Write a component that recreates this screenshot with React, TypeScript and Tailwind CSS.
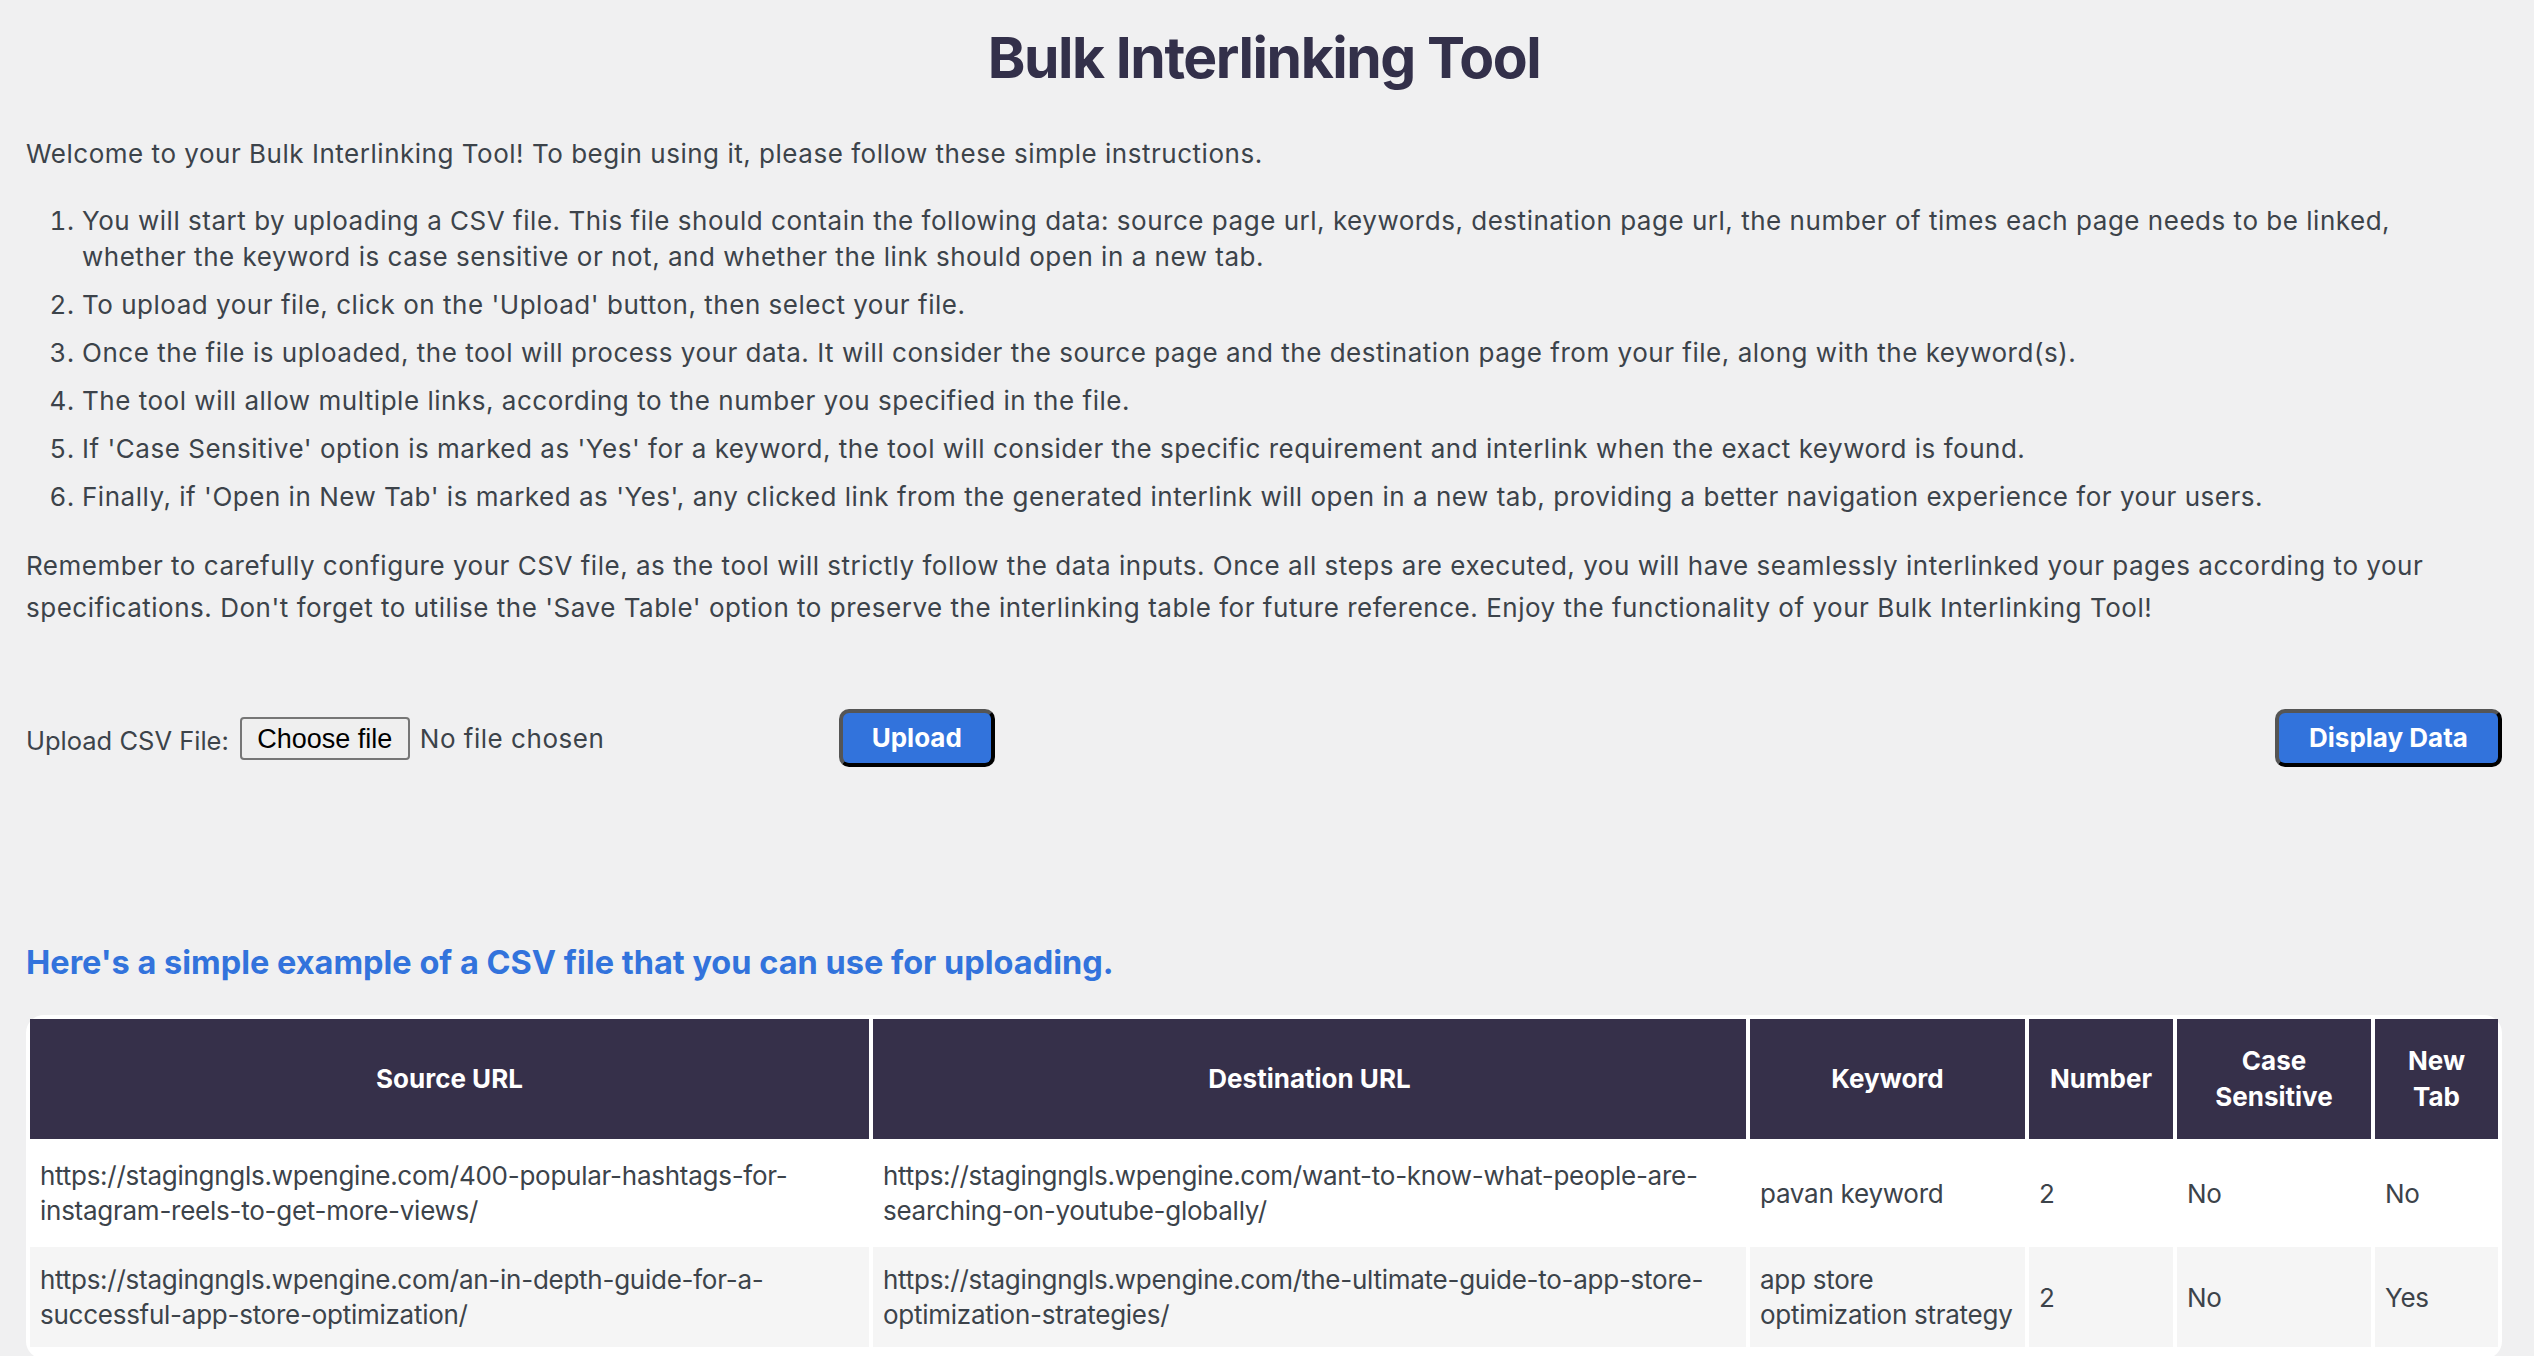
import React from "react";

interface LinkRow {
  source: string;
  destination: string;
  keyword: string;
  number: number;
  caseSensitive: string;
  newTab: string;
}

const SAMPLE_ROWS: LinkRow[] = [
  {
    source:
      "https://stagingngls.wpengine.com/400-popular-hashtags-for-instagram-reels-to-get-more-views/",
    destination:
      "https://stagingngls.wpengine.com/want-to-know-what-people-are-searching-on-youtube-globally/",
    keyword: "pavan keyword",
    number: 2,
    caseSensitive: "No",
    newTab: "No",
  },
  {
    source:
      "https://stagingngls.wpengine.com/an-in-depth-guide-for-a-successful-app-store-optimization/",
    destination:
      "https://stagingngls.wpengine.com/the-ultimate-guide-to-app-store-optimization-strategies/",
    keyword: "app store optimization strategy",
    number: 2,
    caseSensitive: "No",
    newTab: "Yes",
  },
];

const STEPS = [
  "You will start by uploading a CSV file. This file should contain the following data: source page url, keywords, destination page url, the number of times each page needs to be linked, whether the keyword is case sensitive or not, and whether the link should open in a new tab.",
  "To upload your file, click on the 'Upload' button, then select your file.",
  "Once the file is uploaded, the tool will process your data. It will consider the source page and the destination page from your file, along with the keyword(s).",
  "The tool will allow multiple links, according to the number you specified in the file.",
  "If 'Case Sensitive' option is marked as 'Yes' for a keyword, the tool will consider the specific requirement and interlink when the exact keyword is found.",
  "Finally, if 'Open in New Tab' is marked as 'Yes', any clicked link from the generated interlink will open in a new tab, providing a better navigation experience for your users.",
];

const HEADERS = ["Source URL", "Destination URL", "Keyword", "Number", "Case Sensitive", "New Tab"];

const btnClass =
  "h-[58px] rounded-[10px] border-[4px] border-t-[#555] border-l-[#555] border-b-black border-r-black bg-[#3273dc] text-white font-bold text-[26px] leading-none";

const cellClass = "h-[100px] pl-[10px] pr-[4px] leading-[35px] align-middle";

export default function App() {
  const [fileName, setFileName] = React.useState<string | null>(null);
  const fileRef = React.useRef<HTMLInputElement>(null);

  return (
    <div className="min-h-screen bg-[#f0f0f1] text-[#3c434a] font-['Inter',sans-serif] pl-[26px] pr-[32px] pt-[22px] pb-[40px]">
      <h1 className="text-center text-[57px] leading-[72px] font-bold text-[#33304a] tracking-[-0.025em]">
        Bulk Interlinking Tool
      </h1>

      <p className="mt-[42px] text-[26px] leading-[36px] tracking-[0.02em]">
        Welcome to your Bulk Interlinking Tool! To begin using it, please follow these simple
        instructions.
      </p>

      <ol className="mt-[31px] pl-[56px] list-decimal flex flex-col gap-[12px] text-[26px] leading-[36px] tracking-[0.02em]">
        {STEPS.map((step) => (
          <li key={step}>{step}</li>
        ))}
      </ol>

      <p className="mt-[30px] text-[26px] leading-[41.5px] tracking-[0.02em]">
        Remember to carefully configure your CSV file, as the tool will strictly follow the data
        inputs. Once all steps are executed, you will have seamlessly interlinked your pages
        according to your specifications. Don't forget to utilise the 'Save Table' option to
        preserve the interlinking table for future reference. Enjoy the functionality of your Bulk
        Interlinking Tool!
      </p>

      {/* upload form */}
      <div className="mt-[81px] flex items-center justify-between">
        <div className="flex items-center">
          <label className="text-[25.5px] leading-[36px] mt-[6px]">Upload CSV File:</label>
          <div className="ml-[11px] w-[599px] flex items-center">
            <input
              ref={fileRef}
              type="file"
              accept=".csv"
              className="hidden"
              onChange={(e) => setFileName(e.target.files?.[0]?.name ?? null)}
            />
            <button
              type="button"
              onClick={() => fileRef.current?.click()}
              className="h-[43px] w-[170px] rounded-[4px] border-2 border-[#767676] bg-[#efefef] text-black text-[27px] font-['Liberation_Sans',Arial,sans-serif]"
            >
              Choose file
            </button>
            <span className="ml-[10px] text-[26px] tracking-[0.02em]">
              {fileName ?? "No file chosen"}
            </span>
          </div>
          <button type="button" className={`${btnClass} w-[156px]`}>
            Upload
          </button>
        </div>
        <button type="button" className={`${btnClass} w-[227px]`}>
          Display Data
        </button>
      </div>

      <h2 className="mt-[174px] text-[32.5px] leading-[44px] font-bold text-[#3273dc]">
        Here's a simple example of a CSV file that you can use for uploading.
      </h2>

      <div className="mt-[30px] bg-white rounded-[18px] pb-[8px]">
        <table className="w-full table-fixed border-separate border-spacing-[4px] text-[26px]">
          <colgroup>
            <col className="w-[839px]" />
            <col className="w-[873px]" />
            <col className="w-[275px]" />
            <col className="w-[144px]" />
            <col className="w-[194px]" />
            <col className="w-[123px]" />
          </colgroup>
          <thead>
            <tr>
              {HEADERS.map((h) => (
                <th
                  key={h}
                  className="h-[120px] px-[14px] bg-[#36304a] text-white font-bold text-center leading-[36px] align-middle"
                >
                  {h}
                </th>
              ))}
            </tr>
          </thead>
          <tbody className="tracking-[-0.01em]">
            {SAMPLE_ROWS.map((row, i) => (
              <tr key={row.source} className={i % 2 === 1 ? "bg-[#f5f5f5]" : "bg-white"}>
                <td className={cellClass}>{row.source}</td>
                <td className={cellClass}>{row.destination}</td>
                <td className={cellClass}>{row.keyword}</td>
                <td className={cellClass}>{row.number}</td>
                <td className={cellClass}>{row.caseSensitive}</td>
                <td className={cellClass}>{row.newTab}</td>
              </tr>
            ))}
          </tbody>
        </table>
      </div>
    </div>
  );
}
